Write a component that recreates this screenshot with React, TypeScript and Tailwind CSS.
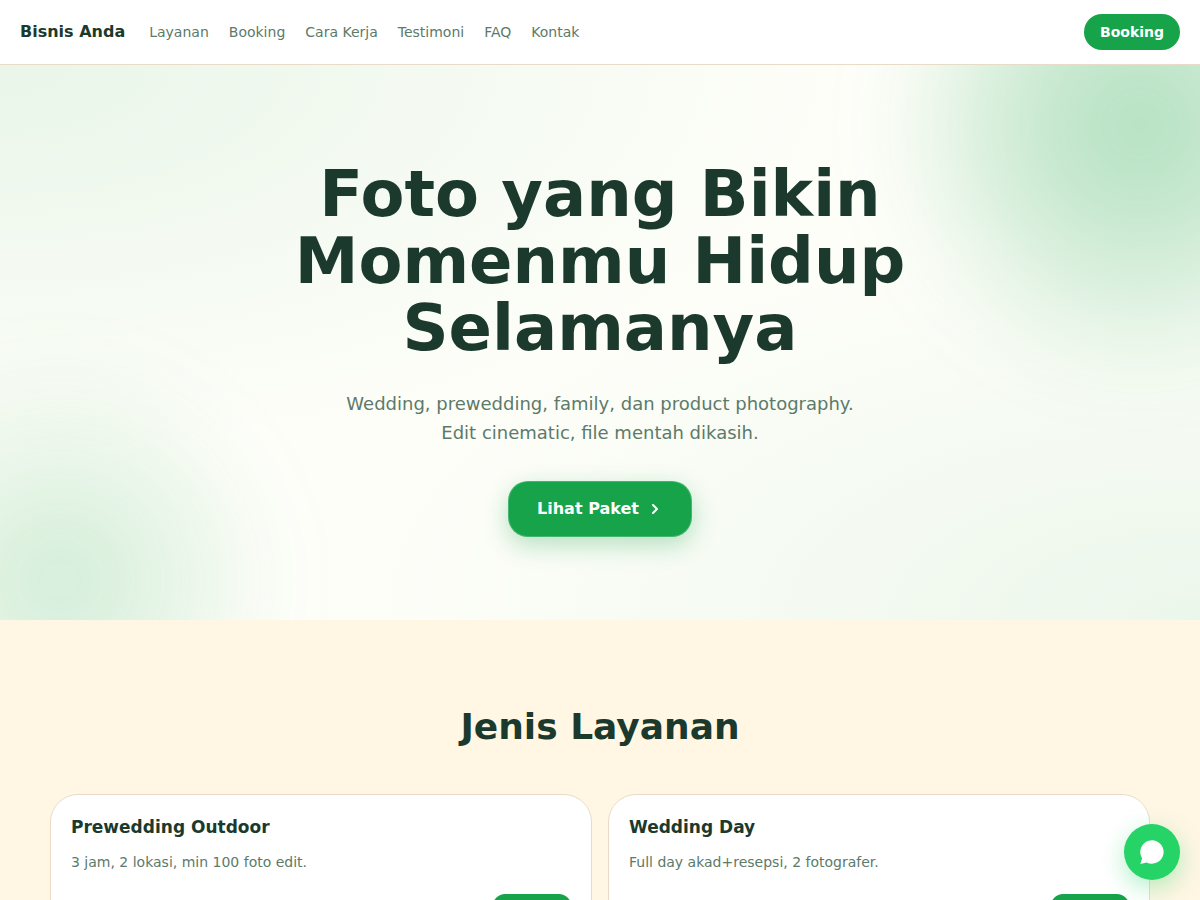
import { ChevronRight } from 'lucide-react'

interface Service {
  title: string
  description: string
}

const navLinks = [
  { label: 'Layanan', href: '#layanan' },
  { label: 'Booking', href: '#booking' },
  { label: 'Cara Kerja', href: '#cara-kerja' },
  { label: 'Testimoni', href: '#testimoni' },
  { label: 'FAQ', href: '#faq' },
  { label: 'Kontak', href: '#kontak' },
]

const services: Service[] = [
  { title: 'Prewedding Outdoor', description: '3 jam, 2 lokasi, min 100 foto edit.' },
  { title: 'Wedding Day', description: 'Full day akad+resepsi, 2 fotografer.' },
]

function Header() {
  return (
    <header className="sticky top-0 z-10 flex h-[65px] items-center justify-between border-b border-[#e8dcc8] bg-white px-5">
      <div className="flex items-center gap-6">
        <a href="#" className="font-bold">
          Bisnis Anda
        </a>
        <nav className="flex items-center gap-5 text-sm text-[#5c7a6a]">
          {navLinks.map((link) => (
            <a key={link.href} href={link.href} className="hover:text-[#1b3a2d]">
              {link.label}
            </a>
          ))}
        </nav>
      </div>
      <a
        href="#booking"
        className="rounded-full bg-[#16a34a] px-4 py-2 text-sm font-semibold text-white"
      >
        Booking
      </a>
    </header>
  )
}

function Hero() {
  return (
    <section className="relative overflow-hidden bg-[#fefef9] bg-[radial-gradient(at_0%_0%,rgba(22,163,74,0.09),transparent_50%),radial-gradient(at_100%_100%,rgba(22,163,74,0.08),transparent_50%)] px-5 pt-24 pb-[83px] text-center">
      {/* Soft colour blobs */}
      <div className="absolute -top-[200px] -right-[200px] size-[520px] rounded-full bg-[radial-gradient(circle,rgba(22,163,74,0.34),rgba(22,163,74,0.2)_35%,transparent_70%)] blur-[40px]" />
      <div className="absolute -bottom-[190px] -left-[170px] size-[460px] rounded-full bg-[radial-gradient(circle,rgba(22,163,74,0.2),transparent_70%)] blur-[40px]" />

      <div className="relative mx-auto flex max-w-3xl flex-col items-center">
        <h1 className="max-w-2xl text-[64px] leading-[67px] font-bold">
          Foto yang Bikin Momenmu Hidup Selamanya
        </h1>
        <p className="mt-[27px] max-w-[540px] text-lg leading-[29px] text-[#5c7a6a]">
          Wedding, prewedding, family, dan product photography. Edit cinematic, file mentah dikasih.
        </p>
        <a
          href="#layanan"
          className="mt-[34px] flex h-14 items-center gap-2 rounded-[20px] border border-white/20 bg-[#16a34a] px-7 font-semibold text-white shadow-[0_8px_24px_rgba(22,163,74,0.3)]"
        >
          Lihat Paket
          <ChevronRight className="size-4" strokeWidth={3} />
        </a>
      </div>
    </section>
  )
}

function ServiceCard({ title, description }: Service) {
  return (
    <article className="flex flex-col rounded-[28px] border border-[#e8dcc8] bg-white p-5">
      <h3 className="text-[17px] leading-6 font-semibold">{title}</h3>
      <p className="mt-3 text-sm leading-[22px] text-[#5c7a6a]">{description}</p>
      <a
        href="#booking"
        className="mt-[21px] self-end rounded-xl bg-[#16a34a] px-[15px] py-3 text-sm font-semibold text-white"
      >
        Pesan
      </a>
    </article>
  )
}

export default function App() {
  return (
    <div className="min-h-screen bg-[#fff6e4] font-['DejaVu_Sans',sans-serif] text-[#1b3a2d]">
      <Header />
      <Hero />
      <section id="layanan" className="px-5 py-20">
        <div className="mx-auto max-w-[1100px]">
          <h2 className="text-center text-4xl leading-[54px] font-bold">Jenis Layanan</h2>
          <div className="mt-10 grid grid-cols-2 gap-4">
            {services.map((service) => (
              <ServiceCard key={service.title} {...service} />
            ))}
          </div>
        </div>
      </section>
      <button
        type="button"
        aria-label="Chat"
        className="fixed right-5 bottom-5 flex size-14 items-center justify-center rounded-full bg-[#25d366] text-white shadow-[0_8px_24px_rgba(37,211,102,0.35)]"
      >
        <svg className="size-7" viewBox="0 0 24 24" fill="currentColor">
          <path d="M12 2a10 10 0 0 0-8.5 15.3L2 22.3l5.4-1.4A10 10 0 1 0 12 2z" />
        </svg>
      </button>
    </div>
  )
}
